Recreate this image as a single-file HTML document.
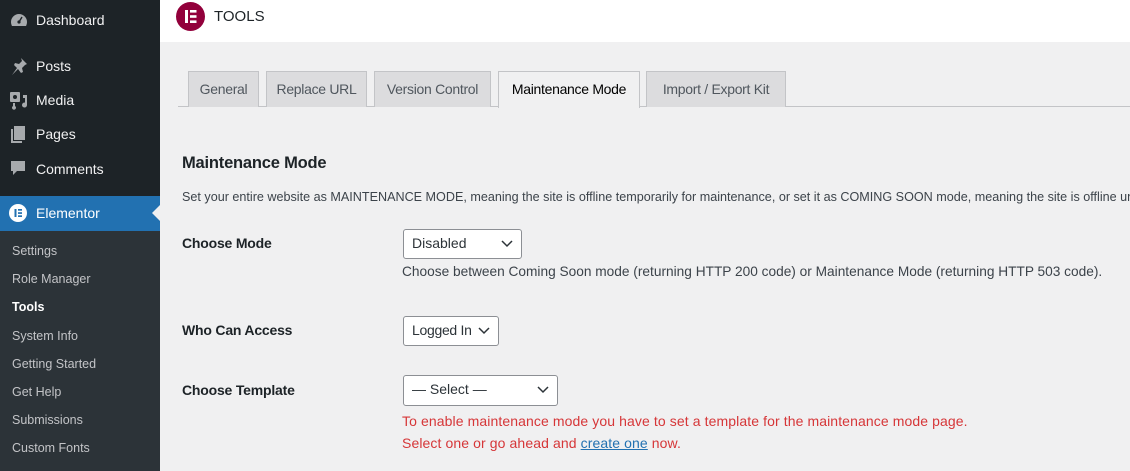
<!DOCTYPE html>
<html><head><style>
*{margin:0;padding:0;box-sizing:border-box}
body{width:1130px;height:471px;overflow:hidden;background:#f0f0f1;font-family:"Liberation Sans",sans-serif;position:relative;color:#1d2327}
.a{position:absolute;white-space:nowrap}
#side{position:absolute;left:0;top:0;width:160px;height:471px;background:#1d2327}
#sub{position:absolute;left:0;top:231px;width:160px;height:240px;background:#2c3338}
.m{color:#f0f0f1;font-size:14px;left:36px}
.s{color:#c3c4c7;font-size:12.5px;left:12px}
.tab{position:absolute;top:71px;height:36px;background:#dcdcde;border:1px solid #c3c4c7;border-bottom:none;font-size:14px;color:#50575e;text-align:center;line-height:34px;letter-spacing:-0.3px}
.lbl{left:182px;font-size:14px;font-weight:bold;color:#1d2327;letter-spacing:-0.2px}
.sel{position:absolute;left:403px;background:#fff;border:1px solid #8c8f94;border-radius:3px;font-size:14px;color:#2c3338;padding-left:8px;line-height:27px}
.sel svg{position:absolute;right:8px;top:10px}
.t{font-size:13.7px;color:#3c434a}
.r{font-size:14px;color:#d63638;left:402px;letter-spacing:0.1px}
</style></head><body>
<div id="side"></div>
<div id="sub"></div>
<div class="a" style="left:0;top:196px;width:160px;height:35px;background:#2271b1"></div>
<svg class="a" style="left:152px;top:205px" width="8" height="16"><polygon points="8,0 0,8 8,16" fill="#f0f0f1"/></svg>
<svg class="a" style="left:10px;top:12px" width="18" height="16" viewBox="0 0 18 16"><path d="M9 2a8 8 0 0 0-8 8c0 1.5.4 2.8 1 4h14c.6-1.2 1-2.5 1-4a8 8 0 0 0-8-8z" fill="#a7aaad"/><circle cx="9" cy="10" r="1.6" fill="#1d2327"/><path d="M9 10l3-5" stroke="#1d2327" stroke-width="1.4"/></svg>
<svg class="a" style="left:10px;top:57px" width="18" height="18" viewBox="0 0 18 18"><path d="M11 1l6 6-2 1-3 3 1 4-2 1-3-4-6 6 5-7-3-3 1-2 4 1 3-3z" fill="#a7aaad"/></svg>
<svg class="a" style="left:9px;top:91px" width="20" height="19" viewBox="0 0 20 19"><rect x="1" y="1" width="10" height="10" rx="1" fill="#a7aaad"/><circle cx="6" cy="6" r="2" fill="#1d2327"/><path d="M14 4h4v10a2.5 2.5 0 1 1-2-2.4V7h-2z" fill="#a7aaad"/><path d="M4 12v3a2 2 0 1 0 2 0v-3z" fill="#a7aaad"/></svg>
<svg class="a" style="left:10px;top:126px" width="16" height="18" viewBox="0 0 16 18"><rect x="4" y="0" width="11" height="14" fill="#a7aaad"/><path d="M1 3v14h11v-2H3V3z" fill="#a7aaad"/></svg>
<svg class="a" style="left:10px;top:160px" width="16" height="17" viewBox="0 0 16 17"><path d="M1 1h14v10H7l-4 4v-4H1z" fill="#a7aaad"/></svg>
<svg class="a" style="left:9px;top:204px" width="18" height="18" viewBox="0 0 18 18"><circle cx="9" cy="9" r="9" fill="#fff"/><rect x="5.5" y="5" width="2" height="8" fill="#2271b1"/><rect x="9" y="5" width="4" height="1.7" fill="#2271b1"/><rect x="9" y="8.2" width="4" height="1.7" fill="#2271b1"/><rect x="9" y="11.3" width="4" height="1.7" fill="#2271b1"/></svg>
<div class="a m" style="top:12px">Dashboard</div>
<div class="a m" style="top:58px">Posts</div>
<div class="a m" style="top:92px">Media</div>
<div class="a m" style="top:126px">Pages</div>
<div class="a m" style="top:161px">Comments</div>
<div class="a m" style="top:205px;color:#fff">Elementor</div>
<div class="a s" style="top:244px">Settings</div>
<div class="a s" style="top:272px">Role Manager</div>
<div class="a s" style="top:300px;color:#fff;font-weight:bold">Tools</div>
<div class="a s" style="top:329px">System Info</div>
<div class="a s" style="top:357px">Getting Started</div>
<div class="a s" style="top:385px">Get Help</div>
<div class="a s" style="top:413px">Submissions</div>
<div class="a s" style="top:441px">Custom Fonts</div>
<div class="a" style="left:160px;top:0;width:970px;height:42px;background:#fff"></div>
<svg class="a" style="left:176px;top:2px" width="29" height="29" viewBox="0 0 29 29"><circle cx="14.5" cy="14.5" r="14.5" fill="#92003b"/><rect x="9" y="8" width="3" height="13" fill="#fff"/><rect x="14" y="8" width="6.5" height="2.6" fill="#fff"/><rect x="14" y="13.2" width="6.5" height="2.6" fill="#fff"/><rect x="14" y="18.4" width="6.5" height="2.6" fill="#fff"/></svg>
<div class="a" style="left:214px;top:8px;font-size:15px;color:#1d2327">TOOLS</div>
<div class="a" style="left:178px;top:106px;width:952px;height:1px;background:#c3c4c7"></div>
<div class="tab" style="left:188px;width:71px">General</div>
<div class="tab" style="left:266px;width:101px">Replace URL</div>
<div class="tab" style="left:374px;width:117px">Version Control</div>
<div class="tab" style="left:498px;width:142px;background:#f0f0f1;color:#000;height:37px">Maintenance Mode</div>
<div class="tab" style="left:646px;width:140px">Import / Export Kit</div>
<div class="a" style="left:182px;top:154px;font-size:16.5px;color:#1d2327;font-weight:600;letter-spacing:-0.2px">Maintenance Mode</div>
<div class="a" style="left:182px;top:190px;width:948px;overflow:hidden"><div class="t" style="font-size:12.6px;white-space:nowrap">Set your entire website as MAINTENANCE MODE, meaning the site is offline temporarily for maintenance, or set it as COMING SOON mode, meaning the site is offline until it is ready</div></div>
<div class="a lbl" style="top:235px">Choose Mode</div>
<div class="sel" style="top:229px;width:119px;height:30px">Disabled<svg width="12" height="8"><path d="M1 1l5 5 5-5" stroke="#2c3338" stroke-width="1.5" fill="none"/></svg></div>
<div class="a t" style="left:402px;top:264px">Choose between Coming Soon mode (returning HTTP 200 code) or Maintenance Mode (returning HTTP 503 code).</div>
<div class="a lbl" style="top:322px">Who Can Access</div>
<div class="sel" style="top:316px;width:96px;height:30px;letter-spacing:-0.3px">Logged In<svg width="12" height="8"><path d="M1 1l5 5 5-5" stroke="#2c3338" stroke-width="1.5" fill="none"/></svg></div>
<div class="a lbl" style="top:382px">Choose Template</div>
<div class="sel" style="top:375px;width:155px;height:31px">— Select —<svg width="12" height="8"><path d="M1 1l5 5 5-5" stroke="#2c3338" stroke-width="1.5" fill="none"/></svg></div>
<div class="a r" style="top:413px">To enable maintenance mode you have to set a template for the maintenance mode page.</div>
<div class="a r" style="top:435px">Select one or go ahead and <span style="color:#2271b1;text-decoration:underline">create one</span> now.</div>
</body></html>
